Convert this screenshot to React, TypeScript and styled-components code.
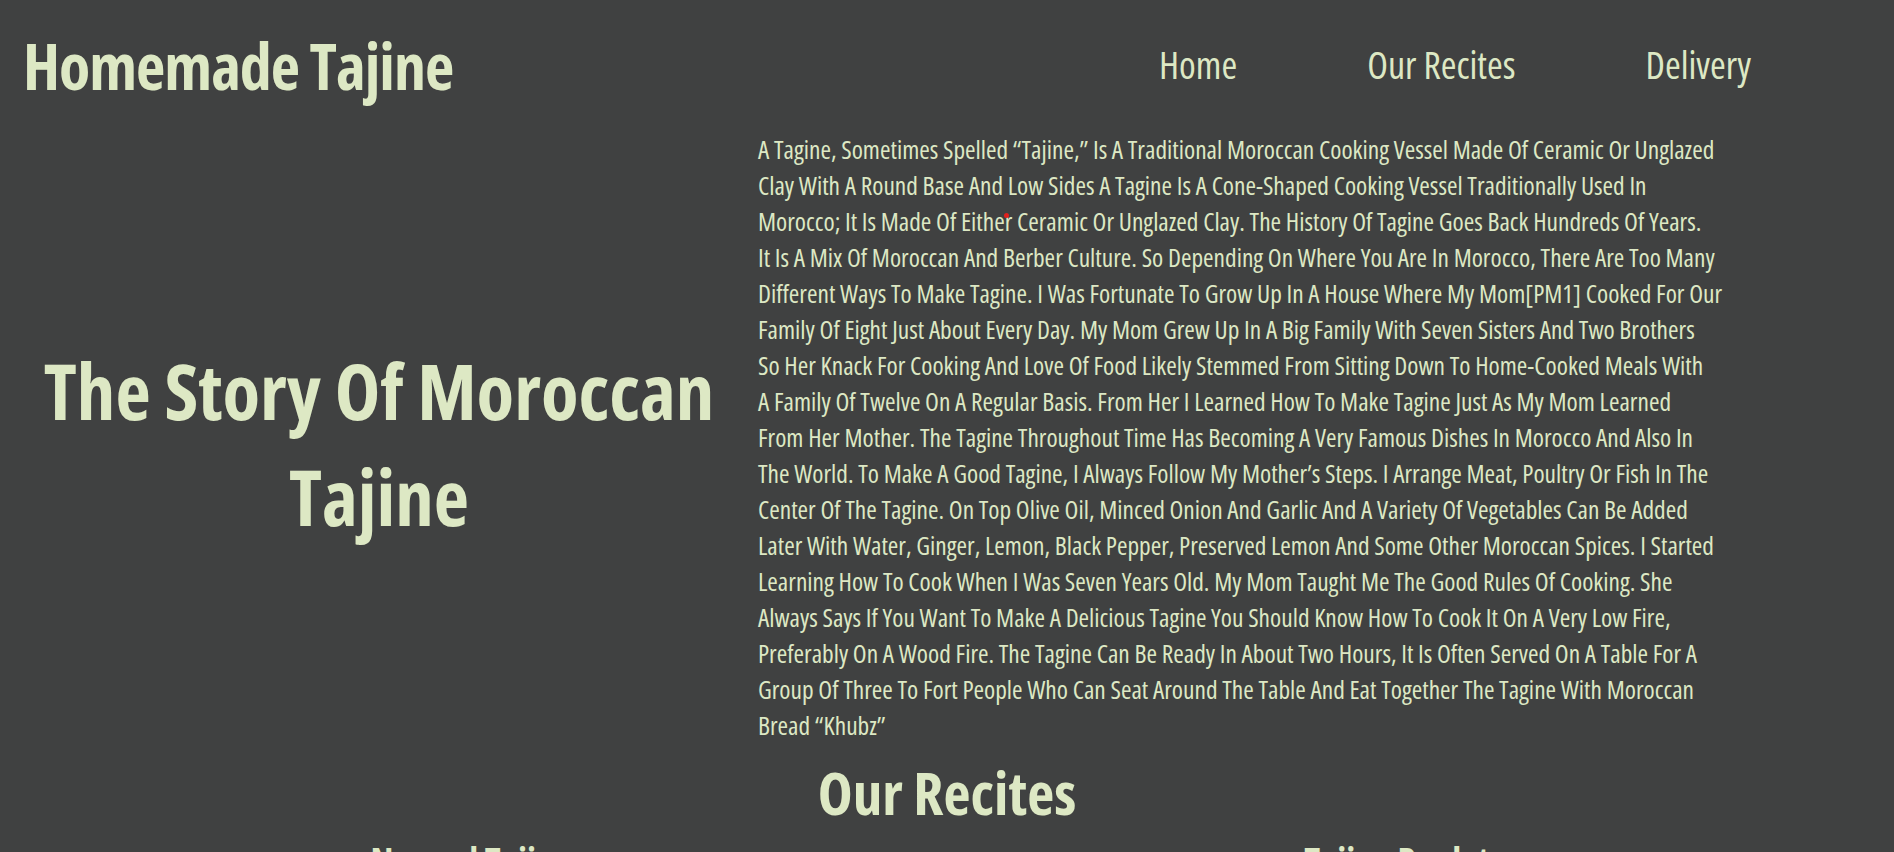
import React from "react";
import styled, { createGlobalStyle } from "styled-components";

const GlobalStyle = createGlobalStyle`
  html, body {
    margin: 0;
    padding: 0;
    background: #404141;
  }
  body {
    font-family: "Open Sans", "Roboto Condensed", sans-serif;
    font-stretch: 75%;
    color: #dde8c4;
  }
  * { box-sizing: border-box; }
`;

const Page = styled.div`
  width: 100%;
  min-height: 100vh;
  background: #404141;
  color: #dde8c4;
  font-family: "Open Sans", "Roboto Condensed", sans-serif;
  font-stretch: 75%;
  overflow: hidden;
`;

const Header = styled.header`
  display: flex;
  align-items: center;
  justify-content: space-between;
  padding: 26px 143px 0 23px;
`;

const Brand = styled.h1`
  margin: 0;
  font-size: 64px;
  line-height: 80px;
  font-weight: 700;
  letter-spacing: -1px;
  white-space: nowrap;
`;

const Nav = styled.nav`
  display: flex;
  align-items: center;
  gap: 130px;
  margin-bottom: 4px;
`;

const NavLink = styled.a`
  font-size: 38px;
  line-height: 42px;
  font-weight: 500;
  color: #dde8c4;
  text-decoration: none;
  white-space: nowrap;
  cursor: pointer;
`;

const Hero = styled.section`
  display: grid;
  grid-template-columns: 758px 1fr;
  margin-top: 25px;
`;

const HeroTitle = styled.h2`
  margin: 14px 0 0;
  align-self: center;
  text-align: center;
  font-size: 77px;
  line-height: 106px;
  font-weight: 700;
`;

const Story = styled.p`
  position: relative;
  margin: 0;
  font-size: 25.4px;
  line-height: 36px;
  font-weight: 500;
`;

const StoryLine = styled.span`
  display: block;
  white-space: nowrap;
`;

const Marker = styled.span`
  position: absolute;
  left: 246px;
  top: 82px;
  width: 5px;
  height: 5px;
  border-radius: 50%;
  background: #e0201c;
`;

const Recipes = styled.section`
  margin-top: 13px;
`;

const SectionTitle = styled.h2`
  margin: 0;
  text-align: center;
  font-size: 59px;
  line-height: 72px;
  font-weight: 700;
`;

const RecipeGrid = styled.div`
  display: grid;
  grid-template-columns: 1fr 1fr;
  padding: 0 34px 0 8px;
  margin-top: 11px;
`;

const RecipeCard = styled.article`
  display: flex;
  flex-direction: column;
  align-items: center;
`;

const RecipeName = styled.h3`
  margin: 0;
  font-size: 37px;
  line-height: 44px;
  font-weight: 700;
  white-space: nowrap;
`;

const storyLines = [
  "A Tagine, Sometimes Spelled “Tajine,” Is A Traditional Moroccan Cooking Vessel Made Of Ceramic Or Unglazed",
  "Clay With A Round Base And Low Sides A Tagine Is A Cone-Shaped Cooking Vessel Traditionally Used In",
  "Morocco; It Is Made Of Either Ceramic Or Unglazed Clay. The History Of Tagine Goes Back Hundreds Of Years.",
  "It Is A Mix Of Moroccan And Berber Culture. So Depending On Where You Are In Morocco, There Are Too Many",
  "Different Ways To Make Tagine. I Was Fortunate To Grow Up In A House Where My Mom[PM1] Cooked For Our",
  "Family Of Eight Just About Every Day. My Mom Grew Up In A Big Family With Seven Sisters And Two Brothers",
  "So Her Knack For Cooking And Love Of Food Likely Stemmed From Sitting Down To Home-Cooked Meals With",
  "A Family Of Twelve On A Regular Basis. From Her I Learned How To Make Tagine Just As My Mom Learned",
  "From Her Mother. The Tagine Throughout Time Has Becoming A Very Famous Dishes In Morocco And Also In",
  "The World. To Make A Good Tagine, I Always Follow My Mother’s Steps. I Arrange Meat, Poultry Or Fish In The",
  "Center Of The Tagine. On Top Olive Oil, Minced Onion And Garlic And A Variety Of Vegetables Can Be Added",
  "Later With Water, Ginger, Lemon, Black Pepper, Preserved Lemon And Some Other Moroccan Spices. I Started",
  "Learning How To Cook When I Was Seven Years Old. My Mom Taught Me The Good Rules Of Cooking. She",
  "Always Says If You Want To Make A Delicious Tagine You Should Know How To Cook It On A Very Low Fire,",
  "Preferably On A Wood Fire. The Tagine Can Be Ready In About Two Hours, It Is Often Served On A Table For A",
  "Group Of Three To Fort People Who Can Seat Around The Table And Eat Together The Tagine With Moroccan",
  "Bread “Khubz”",
];

const recipes = ["Normal Tajine", "Tajine Poulet"];

export default function App() {
  return (
    <Page>
      <GlobalStyle />
      <Header>
        <Brand>Homemade Tajine</Brand>
        <Nav>
          <NavLink>Home</NavLink>
          <NavLink>Our Recites</NavLink>
          <NavLink>Delivery</NavLink>
        </Nav>
      </Header>
      <Hero>
        <HeroTitle>
          The Story Of Moroccan
          <br />
          Tajine
        </HeroTitle>
        <Story>
          {storyLines.map((line, i) => (
            <StoryLine key={i}>{line}</StoryLine>
          ))}
          <Marker />
        </Story>
      </Hero>
      <Recipes>
        <SectionTitle>Our Recites</SectionTitle>
        <RecipeGrid>
          {recipes.map((r) => (
            <RecipeCard key={r}>
              <RecipeName>{r}</RecipeName>
            </RecipeCard>
          ))}
        </RecipeGrid>
      </Recipes>
    </Page>
  );
}
